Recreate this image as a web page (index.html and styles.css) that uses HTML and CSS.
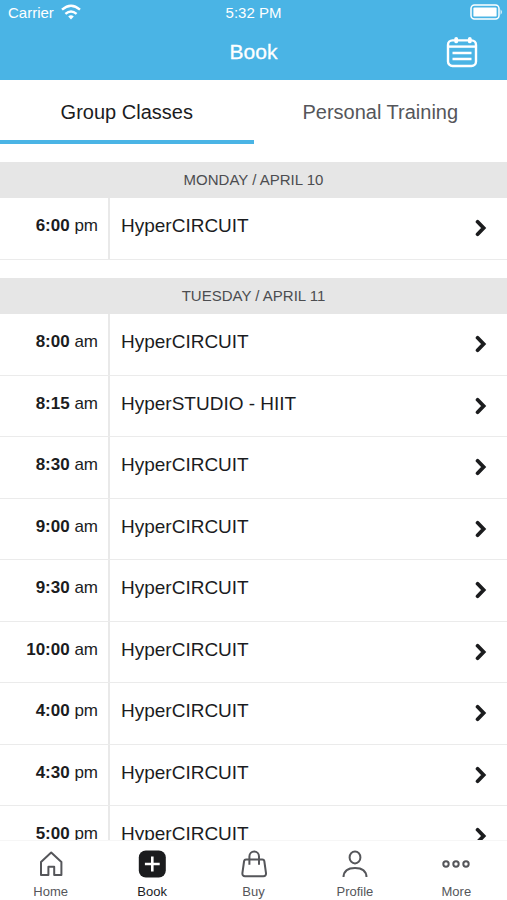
FILE: index.html
```html
<!DOCTYPE html>
<html lang="en">
<head>
    <meta charset="UTF-8">
    <meta name="viewport" content="width=device-width, initial-scale=1.0">
    <title>Book</title>
    <link rel="stylesheet" href="styles.css">
</head>
<body>
    <!-- shared chevron -->
    <svg class="sprite" aria-hidden="true">
        <symbol id="chevron" viewBox="0 0 12 18">
            <path d="M2.6 2.8 L8.6 9 L2.6 15.2" fill="none" stroke="currentColor" stroke-width="3.8" stroke-linecap="round"/>
        </symbol>
    </svg>

    <div class="app">
        <header class="topbar">
            <div class="status">
                <div class="carrier">
                    <span>Carrier</span>
                    <svg width="20" height="16" viewBox="0 0 20 16" fill="none" stroke="#fff" stroke-width="2.4">
                        <path d="M1 5.6 Q10 -2.2 19 5.6"/>
                        <path d="M4.4 9.8 Q10 5 15.6 9.8"/>
                        <path d="M7.2 12.5 Q10 9.9 12.8 12.5 L10 15.5 Z" fill="#fff" stroke="none"/>
                    </svg>
                </div>
                <span class="clock">5:32 PM</span>
                <div class="battery">
                    <svg width="33" height="16" viewBox="0 0 33 16">
                        <rect x="1" y="1" width="28" height="14" rx="3.5" fill="none" stroke="#fff" stroke-width="1.5"/>
                        <rect x="3.4" y="3.4" width="23.2" height="9.2" rx="1.2" fill="#fff"/>
                        <path d="M30.6 5.2 Q33 8 30.6 10.8 Z" fill="#fff"/>
                    </svg>
                </div>
            </div>
            <div class="titlebar">
                <h1>Book</h1>
                <button type="button" class="calendar" aria-label="Calendar">
                    <svg width="32" height="32" viewBox="0 0 32 32" fill="none" stroke="#fff" stroke-width="2.4">
                        <rect x="2" y="4.4" width="28" height="25.6" rx="4.5"/>
                        <path d="M2 10.6 H30"/>
                        <path d="M10.2 2.8 V5.4 M23.8 2.8 V5.4" stroke-width="3.8" stroke-linecap="round"/>
                        <path d="M6.5 17 H25.5 M6.5 23 H25.5"/>
                    </svg>
                </button>
            </div>
        </header>

        <nav class="tabs">
            <a href="#group" class="active">Group Classes</a>
            <a href="#personal">Personal Training</a>
        </nav>

        <main class="schedule">
            <section class="day">
                <h2>MONDAY / APRIL 10</h2>
                <div class="classes">
                    <a href="#" class="row"><span class="time"><b>6:00</b> pm</span><span class="name">HyperCIRCUIT</span><svg class="chevron"><use href="#chevron"/></svg></a>
                </div>
            </section>

            <section class="day">
                <h2>TUESDAY / APRIL 11</h2>
                <div class="classes">
                    <a href="#" class="row"><span class="time"><b>8:00</b> am</span><span class="name">HyperCIRCUIT</span><svg class="chevron"><use href="#chevron"/></svg></a>
                    <a href="#" class="row"><span class="time"><b>8:15</b> am</span><span class="name">HyperSTUDIO - HIIT</span><svg class="chevron"><use href="#chevron"/></svg></a>
                    <a href="#" class="row"><span class="time"><b>8:30</b> am</span><span class="name">HyperCIRCUIT</span><svg class="chevron"><use href="#chevron"/></svg></a>
                    <a href="#" class="row"><span class="time"><b>9:00</b> am</span><span class="name">HyperCIRCUIT</span><svg class="chevron"><use href="#chevron"/></svg></a>
                    <a href="#" class="row"><span class="time"><b>9:30</b> am</span><span class="name">HyperCIRCUIT</span><svg class="chevron"><use href="#chevron"/></svg></a>
                    <a href="#" class="row"><span class="time"><b>10:00</b> am</span><span class="name">HyperCIRCUIT</span><svg class="chevron"><use href="#chevron"/></svg></a>
                    <a href="#" class="row"><span class="time"><b>4:00</b> pm</span><span class="name">HyperCIRCUIT</span><svg class="chevron"><use href="#chevron"/></svg></a>
                    <a href="#" class="row"><span class="time"><b>4:30</b> pm</span><span class="name">HyperCIRCUIT</span><svg class="chevron"><use href="#chevron"/></svg></a>
                    <a href="#" class="row"><span class="time"><b>5:00</b> pm</span><span class="name">HyperCIRCUIT</span><svg class="chevron"><use href="#chevron"/></svg></a>
                </div>
            </section>
        </main>

        <nav class="bottomnav">
            <a href="#home">
                <svg viewBox="0 0 28 28"><path d="M4 25 V12 L14.2 2.6 L24.4 12 V25 H17.2 V16.8 H11.4 V25 Z" stroke-linejoin="round"/></svg>
                <span>Home</span>
            </a>
            <a href="#book" class="active">
                <svg viewBox="0 0 28 28">
                    <rect x="0.8" y="0.5" width="27" height="27" rx="7" fill="#1b1c1e" stroke="none"/>
                    <path d="M14.3 6.6 V21.4 M6.9 14 H21.7" stroke="#fff" stroke-width="2.6"/>
                </svg>
                <span>Book</span>
            </a>
            <a href="#buy">
                <svg viewBox="0 0 28 28">
                    <path d="M6 9.4 H22.4 Q24 9.4 24.3 11 L26 23 Q26.2 26.2 23.4 26.2 H5 Q2.2 26.2 2.4 23 L4.1 11 Q4.4 9.4 6 9.4 Z"/>
                    <path d="M9.4 14.8 V6.4 A4.8 4.8 0 0 1 19 6.4 V14.8"/>
                </svg>
                <span>Buy</span>
            </a>
            <a href="#profile">
                <svg viewBox="0 0 28 28">
                    <ellipse cx="14" cy="7.4" rx="5.4" ry="6"/>
                    <path d="M2.5 27 Q3 18 14 18 Q25 18 25.5 27"/>
                </svg>
                <span>Profile</span>
            </a>
            <a href="#more">
                <svg viewBox="0 0 28 28">
                    <circle cx="4" cy="14" r="2.7"/>
                    <circle cx="14" cy="14" r="2.7"/>
                    <circle cx="24" cy="14" r="2.7"/>
                </svg>
                <span>More</span>
            </a>
        </nav>
    </div>
</body>
</html>
```
FILE: styles.css
```css
* {
    box-sizing: border-box;
}

body {
    margin: 0;
    font-family: "Liberation Sans", Arial, sans-serif;
    color: #1b1c1e;
    background-color: #fff;
}

a {
    color: inherit;
    text-decoration: none;
}

.sprite {
    display: none;
}

.app {
    display: flex;
    flex-direction: column;
    height: 100vh;
}

/* Blue header */
.topbar {
    flex: none;
    background-color: #4ab4e5;
    color: #fff;
}

.status,
.titlebar {
    display: grid;
    grid-template-columns: 1fr auto 1fr;
    align-items: center;
}

.status {
    height: 24px;
    padding: 0 4px;
    font-size: 15px;
}

.carrier {
    display: flex;
    align-items: center;
    gap: 7px;
    padding-left: 4px;
}

.battery {
    display: flex;
    justify-content: flex-end;
}

.titlebar {
    height: 56px;
    padding: 0 29px;
}

.titlebar h1 {
    grid-column: 2;
    margin: 0;
    font-size: 21px;
    font-weight: normal;
    -webkit-text-stroke: 0.3px #fff;
}

.calendar {
    justify-self: end;
    display: flex;
    padding: 0;
    border: none;
    background: none;
    cursor: pointer;
}

/* Tabs */
.tabs {
    flex: none;
    display: flex;
    height: 64px;
}

.tabs a {
    flex: 1;
    text-align: center;
    font-size: 20px;
    line-height: 64px;
    color: #55565a;
}

.tabs .active {
    color: #1b1c1e;
    box-shadow: inset 0 -4px #4ab4e5;
}

/* Schedule */
.schedule {
    flex: 1;
    min-height: 0;
    overflow-y: auto;
    scrollbar-width: none;
}

.day h2 {
    margin: 18px 0 0;
    height: 36px;
    line-height: 36px;
    text-align: center;
    font-size: 15px;
    font-weight: normal;
    color: #4c4d50;
    background-color: #e6e6e6;
}

.row {
    display: flex;
    height: 62px;
    padding-right: 20px;
    border-bottom: 1px solid #ebebeb;
    line-height: 56px;
}

.row:nth-child(even) {
    height: 61px;
}

.time {
    width: 110px;
    padding-right: 10px;
    border-right: 2px solid #e9e9e9;
    text-align: right;
    font-size: 17px;
}

.name {
    flex: 1;
    padding-left: 11px;
    font-size: 19px;
}

.chevron {
    width: 12px;
    height: 18px;
    margin-top: 21px;
}

/* Bottom navigation */
.bottomnav {
    flex: none;
    display: flex;
    height: 60px;
    border-top: 1px solid #f6f6f6;
    background-color: #fff;
}

.bottomnav a {
    flex: 1;
    display: flex;
    flex-direction: column;
    align-items: center;
    gap: 6px;
    padding-top: 9px;
    font-size: 13px;
    line-height: 16px;
    color: #55565a;
}

.bottomnav svg {
    width: 28px;
    height: 28px;
    fill: none;
    stroke: #55565a;
    stroke-width: 2;
}

.bottomnav .active {
    color: #1b1c1e;
}
```
